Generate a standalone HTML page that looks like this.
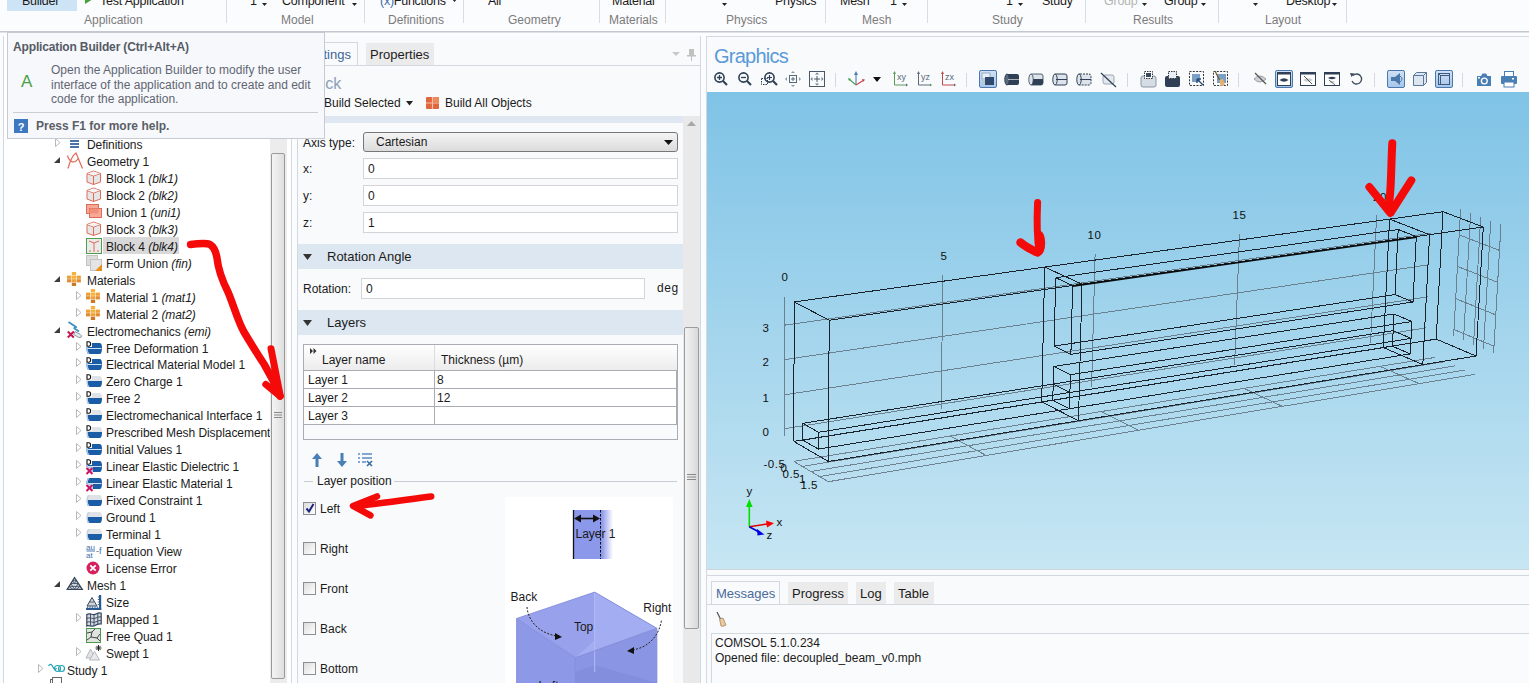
<!DOCTYPE html><html><head><meta charset="utf-8"><title>COMSOL</title><style>
*{margin:0;padding:0;box-sizing:border-box}
html,body{width:1529px;height:683px;overflow:hidden;background:#fbfcfe;font-family:"Liberation Sans",sans-serif;font-size:12px;color:#1b1b1b;position:relative}
.a{position:absolute;white-space:nowrap;line-height:14px}
.lbl{color:#7d7d7d}
.sep{position:absolute;width:1px;background:#d9dce2;top:0;height:23px}
svg{position:absolute;overflow:visible}
i{font-style:italic}
</style></head><body>
<div class="a" style="left:7px;top:0px;width:70px;height:11px;background:#cde4f7;"></div>
<div class="a" style="left:22px;top:-6px;font-size:12.5px;letter-spacing:-0.25px">Builder</div>
<svg style="left:85px;top:-6px;" width="8" height="10" viewBox="0 0 8 10"><path d="M0 0 L8 5 L0 10Z" fill="#46a23a"/></svg>
<div class="a" style="left:100px;top:-6px;font-size:12.5px;letter-spacing:-0.2px">Test Application</div>
<div class="a" style="left:84px;top:13px;color:#7b7b7b;">Application</div>
<div class="sep" style="left:226px"></div>
<div class="a" style="left:250px;top:-6px;font-size:12.5px;letter-spacing:-0.25px">1</div>
<svg style="left:262px;top:3px;" width="5" height="3" viewBox="0 0 5 3"><path d="M0 0H5L2.5 3Z" fill="#222"/></svg>
<div class="a" style="left:282px;top:-6px;font-size:12.5px;letter-spacing:-0.25px">Component</div>
<svg style="left:352px;top:3px;" width="5" height="3" viewBox="0 0 5 3"><path d="M0 0H5L2.5 3Z" fill="#222"/></svg>
<div class="a" style="left:281px;top:13px;color:#7b7b7b;">Model</div>
<div class="sep" style="left:364px"></div>
<div class="a" style="left:380px;top:-6px;font-size:12.5px;letter-spacing:-0.25px"><span style="color:#3b6ea8">(x)</span>Functions</div>
<svg style="left:452px;top:-1px;" width="5" height="3" viewBox="0 0 5 3"><path d="M0 0H5L2.5 3Z" fill="#222"/></svg>
<div class="a" style="left:388px;top:13px;color:#7b7b7b;">Definitions</div>
<div class="sep" style="left:463px"></div>
<div class="a" style="left:488px;top:-6px;font-size:12.5px;letter-spacing:-0.25px">All</div>
<div class="a" style="left:508px;top:13px;color:#7b7b7b;">Geometry</div>
<div class="sep" style="left:599px"></div>
<div class="a" style="left:612px;top:-6px;font-size:12.5px;letter-spacing:-0.25px">Material</div>
<div class="a" style="left:609px;top:13px;color:#7b7b7b;">Materials</div>
<div class="sep" style="left:665px"></div>
<svg style="left:722px;top:3px;" width="5" height="3" viewBox="0 0 5 3"><path d="M0 0H5L2.5 3Z" fill="#222"/></svg>
<div class="a" style="left:775px;top:-6px;font-size:12.5px;letter-spacing:-0.25px">Physics</div>
<div class="a" style="left:726px;top:13px;color:#7b7b7b;">Physics</div>
<div class="sep" style="left:825px"></div>
<div class="a" style="left:840px;top:-6px;font-size:12.5px;letter-spacing:-0.25px">Mesh</div>
<div class="a" style="left:890px;top:-6px;font-size:12.5px;letter-spacing:-0.25px">1</div>
<svg style="left:902px;top:3px;" width="5" height="3" viewBox="0 0 5 3"><path d="M0 0H5L2.5 3Z" fill="#222"/></svg>
<div class="a" style="left:862px;top:13px;color:#7b7b7b;">Mesh</div>
<div class="sep" style="left:927px"></div>
<div class="a" style="left:1006px;top:-6px;font-size:12.5px;letter-spacing:-0.25px">1</div>
<svg style="left:1018px;top:3px;" width="5" height="3" viewBox="0 0 5 3"><path d="M0 0H5L2.5 3Z" fill="#222"/></svg>
<div class="a" style="left:1042px;top:-6px;font-size:12.5px;letter-spacing:-0.25px">Study</div>
<div class="a" style="left:992px;top:13px;color:#7b7b7b;">Study</div>
<div class="sep" style="left:1085px"></div>
<div class="a" style="left:1104px;top:-6px;font-size:12.5px;color:#b4b4b4;letter-spacing:-0.25px">Group</div>
<svg style="left:1142px;top:3px;" width="5" height="3" viewBox="0 0 5 3"><path d="M0 0H5L2.5 3Z" fill="#222"/></svg>
<div class="a" style="left:1164px;top:-6px;font-size:12.5px;letter-spacing:-0.25px">Group</div>
<svg style="left:1201px;top:3px;" width="5" height="3" viewBox="0 0 5 3"><path d="M0 0H5L2.5 3Z" fill="#222"/></svg>
<div class="a" style="left:1133px;top:13px;color:#7b7b7b;">Results</div>
<div class="sep" style="left:1218px"></div>
<svg style="left:1253px;top:3px;" width="5" height="3" viewBox="0 0 5 3"><path d="M0 0H5L2.5 3Z" fill="#222"/></svg>
<div class="a" style="left:1286px;top:-6px;font-size:12.5px;letter-spacing:-0.25px">Desktop</div>
<svg style="left:1332px;top:3px;" width="5" height="3" viewBox="0 0 5 3"><path d="M0 0H5L2.5 3Z" fill="#222"/></svg>
<div class="a" style="left:1265px;top:13px;color:#7b7b7b;">Layout</div>
<div class="sep" style="left:1346px"></div>
<div class="a" style="left:0px;top:31px;width:1529px;height:1px;background:#c3c7cf;"></div>
<div class="a" style="left:0px;top:32px;width:1529px;height:1px;background:#dfe2e7;"></div>
<div class="a" style="left:3px;top:36px;width:289px;height:647px;background:#ffffff;border-left:1px solid #d3d7de;border-right:1px solid #d3d7de"></div>
<svg style="left:55px;top:138px;" width="6" height="9" viewBox="0 0 6 9"><path d="M0.5 0.5L5 4.5L0.5 8.5Z" fill="#fff" stroke="#b9b9b9" stroke-width="1"/></svg>
<svg style="left:70px;top:140px;" width="17" height="17" viewBox="0 0 17 17"><rect x="0" y="0" width="9" height="2" fill="#4a72a8"/><rect x="0" y="3" width="9" height="2" fill="#4a72a8"/><rect x="0" y="6" width="9" height="2" fill="#4a72a8"/></svg>
<div class="a" style="left:87px;top:138px;letter-spacing:-0.06px">Definitions</div>
<svg style="left:54px;top:157px;" width="7" height="7" viewBox="0 0 7 7"><path d="M6 0V6H0Z" fill="#3c3c3c"/></svg>
<svg style="left:67px;top:152px;" width="17" height="17" viewBox="0 0 17 17"><path d="M1 16.5 C3 9 6 3 9 1 L15.5 16.5 M0.5 3.5 C2.5 11 8 12 11.5 6" fill="none" stroke="#e06a58" stroke-width="1.2"/></svg>
<div class="a" style="left:87px;top:155px;letter-spacing:-0.06px">Geometry 1</div>
<svg style="left:86px;top:170px;" width="17" height="17" viewBox="0 0 17 17"><path d="M1 3.5 L7.5 1 L14.5 3.5 L14.5 12 L7.5 14.5 L1 12Z" fill="#e6e6e6" stroke="#e06a58" stroke-width="1"/><path d="M1 3.5 L7.5 6 L14.5 3.5 M7.5 6 V14.5" fill="none" stroke="#e06a58" stroke-width="1"/><path d="M1.5 3.6 L7.5 1.5 L14 3.6 L7.5 5.6Z" fill="#f4f4f4"/></svg>
<div class="a" style="left:106px;top:172px;letter-spacing:-0.06px">Block 1 <i>(blk1)</i></div>
<svg style="left:86px;top:187px;" width="17" height="17" viewBox="0 0 17 17"><path d="M1 3.5 L7.5 1 L14.5 3.5 L14.5 12 L7.5 14.5 L1 12Z" fill="#e6e6e6" stroke="#e06a58" stroke-width="1"/><path d="M1 3.5 L7.5 6 L14.5 3.5 M7.5 6 V14.5" fill="none" stroke="#e06a58" stroke-width="1"/><path d="M1.5 3.6 L7.5 1.5 L14 3.6 L7.5 5.6Z" fill="#f4f4f4"/></svg>
<div class="a" style="left:106px;top:189px;letter-spacing:-0.06px">Block 2 <i>(blk2)</i></div>
<svg style="left:86px;top:204px;" width="17" height="17" viewBox="0 0 17 17"><rect x="0.5" y="0.5" width="12" height="9" fill="#f7a995" stroke="#e06a58"/><rect x="3.5" y="4.5" width="12" height="9" fill="#f7a995" stroke="#e06a58"/><path d="M3.5 4.5 H12.5 V9.5 H3.5Z" fill="#f08f7a"/></svg>
<div class="a" style="left:106px;top:206px;letter-spacing:-0.06px">Union 1 <i>(uni1)</i></div>
<svg style="left:86px;top:221px;" width="17" height="17" viewBox="0 0 17 17"><path d="M1 3.5 L7.5 1 L14.5 3.5 L14.5 12 L7.5 14.5 L1 12Z" fill="#e6e6e6" stroke="#e06a58" stroke-width="1"/><path d="M1 3.5 L7.5 6 L14.5 3.5 M7.5 6 V14.5" fill="none" stroke="#e06a58" stroke-width="1"/><path d="M1.5 3.6 L7.5 1.5 L14 3.6 L7.5 5.6Z" fill="#f4f4f4"/></svg>
<div class="a" style="left:106px;top:223px;letter-spacing:-0.06px">Block 3 <i>(blk3)</i></div>
<svg style="left:86px;top:238px;" width="17" height="17" viewBox="0 0 17 17"><rect x="0.5" y="0.5" width="15" height="15" fill="#eaeaea" stroke="#4aa04a"/><path d="M3 3 L8 5 L13 3 M8 5 V14 M3 13 H5 M11 13 H13" fill="none" stroke="#e06a58"/></svg>
<div class="a" style="left:103px;top:237px;width:76px;height:17px;background:#d9d9d9;"></div>
<div class="a" style="left:106px;top:240px;letter-spacing:-0.06px">Block 4 <i>(blk4)</i></div>
<svg style="left:86px;top:255px;" width="17" height="17" viewBox="0 0 17 17"><rect x="0.5" y="0.5" width="11" height="10" fill="#dcdcdc" stroke="#c4c4c4"/><rect x="4.5" y="4.5" width="11" height="11" fill="#e4e4e4" stroke="#c4c4c4"/><path d="M16 9 V16 H9Z" fill="#e8901c"/></svg>
<div class="a" style="left:106px;top:257px;letter-spacing:-0.06px">Form Union <i>(fin)</i></div>
<svg style="left:54px;top:276px;" width="7" height="7" viewBox="0 0 7 7"><path d="M6 0V6H0Z" fill="#3c3c3c"/></svg>
<svg style="left:67px;top:272px;" width="17" height="17" viewBox="0 0 17 17"><rect x="4.8" y="0" width="4.3" height="3.2" fill="#f7b23b"/><rect x="0" y="3.6" width="4.3" height="3.2" fill="#eea03a"/><rect x="4.8" y="3.6" width="4.3" height="3.2" fill="#f7b23b"/><rect x="9.6" y="3.6" width="4.3" height="3.2" fill="#eea03a"/><rect x="0" y="7.2" width="4.3" height="3.2" fill="#e08c30"/><rect x="4.8" y="7.2" width="4.3" height="3.2" fill="#eea03a"/><rect x="9.6" y="7.2" width="4.3" height="3.2" fill="#e08c30"/><rect x="4.8" y="10.8" width="4.3" height="3.2" fill="#c9782a"/></svg>
<div class="a" style="left:87px;top:274px;letter-spacing:-0.06px">Materials</div>
<svg style="left:76px;top:291px;" width="6" height="9" viewBox="0 0 6 9"><path d="M0.5 0.5L5 4.5L0.5 8.5Z" fill="#fff" stroke="#b9b9b9" stroke-width="1"/></svg>
<svg style="left:86px;top:289px;" width="17" height="17" viewBox="0 0 17 17"><rect x="4.8" y="0" width="4.3" height="3.2" fill="#f7b23b"/><rect x="0" y="3.6" width="4.3" height="3.2" fill="#eea03a"/><rect x="4.8" y="3.6" width="4.3" height="3.2" fill="#f7b23b"/><rect x="9.6" y="3.6" width="4.3" height="3.2" fill="#eea03a"/><rect x="0" y="7.2" width="4.3" height="3.2" fill="#e08c30"/><rect x="4.8" y="7.2" width="4.3" height="3.2" fill="#eea03a"/><rect x="9.6" y="7.2" width="4.3" height="3.2" fill="#e08c30"/><rect x="4.8" y="10.8" width="4.3" height="3.2" fill="#c9782a"/></svg>
<div class="a" style="left:106px;top:291px;letter-spacing:-0.06px">Material 1 <i>(mat1)</i></div>
<svg style="left:76px;top:308px;" width="6" height="9" viewBox="0 0 6 9"><path d="M0.5 0.5L5 4.5L0.5 8.5Z" fill="#fff" stroke="#b9b9b9" stroke-width="1"/></svg>
<svg style="left:86px;top:306px;" width="17" height="17" viewBox="0 0 17 17"><rect x="4.8" y="0" width="4.3" height="3.2" fill="#f7b23b"/><rect x="0" y="3.6" width="4.3" height="3.2" fill="#eea03a"/><rect x="4.8" y="3.6" width="4.3" height="3.2" fill="#f7b23b"/><rect x="9.6" y="3.6" width="4.3" height="3.2" fill="#eea03a"/><rect x="0" y="7.2" width="4.3" height="3.2" fill="#e08c30"/><rect x="4.8" y="7.2" width="4.3" height="3.2" fill="#eea03a"/><rect x="9.6" y="7.2" width="4.3" height="3.2" fill="#e08c30"/><rect x="4.8" y="10.8" width="4.3" height="3.2" fill="#c9782a"/></svg>
<div class="a" style="left:106px;top:308px;letter-spacing:-0.06px">Material 2 <i>(mat2)</i></div>
<svg style="left:54px;top:327px;" width="7" height="7" viewBox="0 0 7 7"><path d="M6 0V6H0Z" fill="#3c3c3c"/></svg>
<svg style="left:67px;top:321px;" width="17" height="17" viewBox="0 0 17 17"><path d="M1.5 1 L9.5 6.2 L6.8 7 L12 10.5" fill="none" stroke="#3f8ec4" stroke-width="1.8" stroke-linejoin="bevel"/><path d="M8 10.5 L13 13.2 Q15.2 14.6 14.2 16 Q13.2 17.2 11.2 16.2 L6.8 13.6Z" fill="#e4eaee" stroke="#7d8c98" stroke-width="0.9"/><path d="M0.8 10.5 L6.8 16.5 M6.8 10.5 L0.8 16.5" stroke="#c8124e" stroke-width="1.9"/></svg>
<div class="a" style="left:87px;top:325px;letter-spacing:-0.06px">Electromechanics <i>(emi)</i></div>
<svg style="left:76px;top:342px;" width="6" height="9" viewBox="0 0 6 9"><path d="M0.5 0.5L5 4.5L0.5 8.5Z" fill="#fff" stroke="#b9b9b9" stroke-width="1"/></svg>
<svg style="left:86px;top:342px;" width="17" height="14" viewBox="0 0 17 14"><path d="M3 1 H13.5 Q16 1 16 6 Q16 12 13.5 12 H3 Q0.5 12 0.5 6.5 Q0.5 1 3 1Z" fill="#1b5ca6"/><path d="M1.5 6.5 H15.5" stroke="#cfe0f2" stroke-width="1"/><path d="M3.2 1.5 Q1.2 1.5 1.2 6.5 Q1.2 11.5 3.2 11.5" fill="none" stroke="#a9c8ea" stroke-width="1.3"/><rect x="0" y="-1" width="6" height="6" fill="#fff"/><path d="M1 -0.2 H2.8 Q4.6 -0.2 4.6 2 Q4.6 4.2 2.8 4.2 H1Z" fill="none" stroke="#111" stroke-width="1.1"/></svg>
<div class="a" style="left:106px;top:342px;letter-spacing:-0.06px">Free Deformation 1</div>
<svg style="left:76px;top:358px;" width="6" height="9" viewBox="0 0 6 9"><path d="M0.5 0.5L5 4.5L0.5 8.5Z" fill="#fff" stroke="#b9b9b9" stroke-width="1"/></svg>
<svg style="left:86px;top:358px;" width="17" height="14" viewBox="0 0 17 14"><path d="M3 1 H13.5 Q16 1 16 6 Q16 12 13.5 12 H3 Q0.5 12 0.5 6.5 Q0.5 1 3 1Z" fill="#1b5ca6"/><path d="M1.5 6.5 H15.5" stroke="#cfe0f2" stroke-width="1"/><path d="M3.2 1.5 Q1.2 1.5 1.2 6.5 Q1.2 11.5 3.2 11.5" fill="none" stroke="#a9c8ea" stroke-width="1.3"/><rect x="0" y="-1" width="6" height="6" fill="#fff"/><path d="M1 -0.2 H2.8 Q4.6 -0.2 4.6 2 Q4.6 4.2 2.8 4.2 H1Z" fill="none" stroke="#111" stroke-width="1.1"/></svg>
<div class="a" style="left:106px;top:358px;letter-spacing:-0.06px">Electrical Material Model 1</div>
<svg style="left:76px;top:375px;" width="6" height="9" viewBox="0 0 6 9"><path d="M0.5 0.5L5 4.5L0.5 8.5Z" fill="#fff" stroke="#b9b9b9" stroke-width="1"/></svg>
<svg style="left:86px;top:375px;" width="17" height="14" viewBox="0 0 17 14"><path d="M3 1 H13.5 Q16 1 16 6 Q16 12 13.5 12 H3 Q0.5 12 0.5 6.5 Q0.5 1 3 1Z" fill="#dfe2e6"/><path d="M1 6 H16 Q16 12 13.5 12 H3 Q0.5 12 1 6Z" fill="#1b5ca6"/><path d="M3.2 1.5 Q1.2 1.5 1.2 6.5 Q1.2 11.5 3.2 11.5" fill="none" stroke="#c3d3e3" stroke-width="1.3"/><rect x="0" y="-1" width="6" height="6" fill="#fff"/><path d="M1 -0.2 H2.8 Q4.6 -0.2 4.6 2 Q4.6 4.2 2.8 4.2 H1Z" fill="none" stroke="#111" stroke-width="1.1"/></svg>
<div class="a" style="left:106px;top:375px;letter-spacing:-0.06px">Zero Charge 1</div>
<svg style="left:76px;top:392px;" width="6" height="9" viewBox="0 0 6 9"><path d="M0.5 0.5L5 4.5L0.5 8.5Z" fill="#fff" stroke="#b9b9b9" stroke-width="1"/></svg>
<svg style="left:86px;top:392px;" width="17" height="14" viewBox="0 0 17 14"><path d="M3 1 H13.5 Q16 1 16 6 Q16 12 13.5 12 H3 Q0.5 12 0.5 6.5 Q0.5 1 3 1Z" fill="#dfe2e6"/><path d="M1 6 H16 Q16 12 13.5 12 H3 Q0.5 12 1 6Z" fill="#1b5ca6"/><path d="M3.2 1.5 Q1.2 1.5 1.2 6.5 Q1.2 11.5 3.2 11.5" fill="none" stroke="#c3d3e3" stroke-width="1.3"/><rect x="0" y="-1" width="6" height="6" fill="#fff"/><path d="M1 -0.2 H2.8 Q4.6 -0.2 4.6 2 Q4.6 4.2 2.8 4.2 H1Z" fill="none" stroke="#111" stroke-width="1.1"/></svg>
<div class="a" style="left:106px;top:392px;letter-spacing:-0.06px">Free 2</div>
<svg style="left:76px;top:409px;" width="6" height="9" viewBox="0 0 6 9"><path d="M0.5 0.5L5 4.5L0.5 8.5Z" fill="#fff" stroke="#b9b9b9" stroke-width="1"/></svg>
<svg style="left:86px;top:409px;" width="17" height="14" viewBox="0 0 17 14"><path d="M3 1 H13.5 Q16 1 16 6 Q16 12 13.5 12 H3 Q0.5 12 0.5 6.5 Q0.5 1 3 1Z" fill="#dfe2e6"/><path d="M1 6 H16 Q16 12 13.5 12 H3 Q0.5 12 1 6Z" fill="#1b5ca6"/><path d="M3.2 1.5 Q1.2 1.5 1.2 6.5 Q1.2 11.5 3.2 11.5" fill="none" stroke="#c3d3e3" stroke-width="1.3"/><rect x="0" y="-1" width="6" height="6" fill="#fff"/><path d="M1 -0.2 H2.8 Q4.6 -0.2 4.6 2 Q4.6 4.2 2.8 4.2 H1Z" fill="none" stroke="#111" stroke-width="1.1"/></svg>
<div class="a" style="left:106px;top:409px;letter-spacing:-0.06px">Electromechanical Interface 1</div>
<svg style="left:76px;top:426px;" width="6" height="9" viewBox="0 0 6 9"><path d="M0.5 0.5L5 4.5L0.5 8.5Z" fill="#fff" stroke="#b9b9b9" stroke-width="1"/></svg>
<svg style="left:86px;top:426px;" width="17" height="14" viewBox="0 0 17 14"><path d="M3 1 H13.5 Q16 1 16 6 Q16 12 13.5 12 H3 Q0.5 12 0.5 6.5 Q0.5 1 3 1Z" fill="#dfe2e6"/><path d="M1 6 H16 Q16 12 13.5 12 H3 Q0.5 12 1 6Z" fill="#1b5ca6"/><path d="M3.2 1.5 Q1.2 1.5 1.2 6.5 Q1.2 11.5 3.2 11.5" fill="none" stroke="#c3d3e3" stroke-width="1.3"/><rect x="0" y="-1" width="6" height="6" fill="#fff"/><path d="M1 -0.2 H2.8 Q4.6 -0.2 4.6 2 Q4.6 4.2 2.8 4.2 H1Z" fill="none" stroke="#111" stroke-width="1.1"/></svg>
<div class="a" style="left:106px;top:426px;letter-spacing:-0.06px">Prescribed Mesh Displacement</div>
<svg style="left:76px;top:443px;" width="6" height="9" viewBox="0 0 6 9"><path d="M0.5 0.5L5 4.5L0.5 8.5Z" fill="#fff" stroke="#b9b9b9" stroke-width="1"/></svg>
<svg style="left:86px;top:443px;" width="17" height="14" viewBox="0 0 17 14"><path d="M3 1 H13.5 Q16 1 16 6 Q16 12 13.5 12 H3 Q0.5 12 0.5 6.5 Q0.5 1 3 1Z" fill="#1b5ca6"/><path d="M1.5 6.5 H15.5" stroke="#cfe0f2" stroke-width="1"/><path d="M3.2 1.5 Q1.2 1.5 1.2 6.5 Q1.2 11.5 3.2 11.5" fill="none" stroke="#a9c8ea" stroke-width="1.3"/><rect x="0" y="-1" width="6" height="6" fill="#fff"/><path d="M1 -0.2 H2.8 Q4.6 -0.2 4.6 2 Q4.6 4.2 2.8 4.2 H1Z" fill="none" stroke="#111" stroke-width="1.1"/></svg>
<div class="a" style="left:106px;top:443px;letter-spacing:-0.06px">Initial Values 1</div>
<svg style="left:76px;top:460px;" width="6" height="9" viewBox="0 0 6 9"><path d="M0.5 0.5L5 4.5L0.5 8.5Z" fill="#fff" stroke="#b9b9b9" stroke-width="1"/></svg>
<svg style="left:86px;top:460px;" width="17" height="14" viewBox="0 0 17 14"><path d="M3 1 H13.5 Q16 1 16 6 Q16 12 13.5 12 H3 Q0.5 12 0.5 6.5 Q0.5 1 3 1Z" fill="#1b5ca6"/><path d="M1.5 6.5 H15.5" stroke="#cfe0f2" stroke-width="1"/><path d="M3.2 1.5 Q1.2 1.5 1.2 6.5 Q1.2 11.5 3.2 11.5" fill="none" stroke="#a9c8ea" stroke-width="1.3"/><rect x="0" y="-1" width="6" height="6" fill="#fff"/><path d="M1 -0.2 H2.8 Q4.6 -0.2 4.6 2 Q4.6 4.2 2.8 4.2 H1Z" fill="none" stroke="#111" stroke-width="1.1"/><rect x="0" y="7" width="7" height="7" fill="#fff" opacity="0.7"/><path d="M0.5 8 L6.5 14 M6.5 8 L0.5 14" stroke="#cc1260" stroke-width="1.9"/></svg>
<div class="a" style="left:106px;top:460px;letter-spacing:-0.06px">Linear Elastic Dielectric 1</div>
<svg style="left:76px;top:477px;" width="6" height="9" viewBox="0 0 6 9"><path d="M0.5 0.5L5 4.5L0.5 8.5Z" fill="#fff" stroke="#b9b9b9" stroke-width="1"/></svg>
<svg style="left:86px;top:477px;" width="17" height="14" viewBox="0 0 17 14"><path d="M3 1 H13.5 Q16 1 16 6 Q16 12 13.5 12 H3 Q0.5 12 0.5 6.5 Q0.5 1 3 1Z" fill="#1b5ca6"/><path d="M1.5 6.5 H15.5" stroke="#cfe0f2" stroke-width="1"/><path d="M3.2 1.5 Q1.2 1.5 1.2 6.5 Q1.2 11.5 3.2 11.5" fill="none" stroke="#a9c8ea" stroke-width="1.3"/><rect x="0" y="7" width="7" height="7" fill="#fff" opacity="0.7"/><path d="M0.5 8 L6.5 14 M6.5 8 L0.5 14" stroke="#cc1260" stroke-width="1.9"/></svg>
<div class="a" style="left:106px;top:477px;letter-spacing:-0.06px">Linear Elastic Material 1</div>
<svg style="left:76px;top:494px;" width="6" height="9" viewBox="0 0 6 9"><path d="M0.5 0.5L5 4.5L0.5 8.5Z" fill="#fff" stroke="#b9b9b9" stroke-width="1"/></svg>
<svg style="left:86px;top:494px;" width="17" height="14" viewBox="0 0 17 14"><path d="M3 1 H13.5 Q16 1 16 6 Q16 12 13.5 12 H3 Q0.5 12 0.5 6.5 Q0.5 1 3 1Z" fill="#dfe2e6"/><path d="M1 6 H16 Q16 12 13.5 12 H3 Q0.5 12 1 6Z" fill="#1b5ca6"/><path d="M3.2 1.5 Q1.2 1.5 1.2 6.5 Q1.2 11.5 3.2 11.5" fill="none" stroke="#c3d3e3" stroke-width="1.3"/></svg>
<div class="a" style="left:106px;top:494px;letter-spacing:-0.06px">Fixed Constraint 1</div>
<svg style="left:76px;top:511px;" width="6" height="9" viewBox="0 0 6 9"><path d="M0.5 0.5L5 4.5L0.5 8.5Z" fill="#fff" stroke="#b9b9b9" stroke-width="1"/></svg>
<svg style="left:86px;top:511px;" width="17" height="14" viewBox="0 0 17 14"><path d="M3 1 H13.5 Q16 1 16 6 Q16 12 13.5 12 H3 Q0.5 12 0.5 6.5 Q0.5 1 3 1Z" fill="#dfe2e6"/><path d="M1 6 H16 Q16 12 13.5 12 H3 Q0.5 12 1 6Z" fill="#1b5ca6"/><path d="M3.2 1.5 Q1.2 1.5 1.2 6.5 Q1.2 11.5 3.2 11.5" fill="none" stroke="#c3d3e3" stroke-width="1.3"/></svg>
<div class="a" style="left:106px;top:511px;letter-spacing:-0.06px">Ground 1</div>
<svg style="left:76px;top:528px;" width="6" height="9" viewBox="0 0 6 9"><path d="M0.5 0.5L5 4.5L0.5 8.5Z" fill="#fff" stroke="#b9b9b9" stroke-width="1"/></svg>
<svg style="left:86px;top:528px;" width="17" height="14" viewBox="0 0 17 14"><path d="M3 1 H13.5 Q16 1 16 6 Q16 12 13.5 12 H3 Q0.5 12 0.5 6.5 Q0.5 1 3 1Z" fill="#dfe2e6"/><path d="M1 6 H16 Q16 12 13.5 12 H3 Q0.5 12 1 6Z" fill="#1b5ca6"/><path d="M3.2 1.5 Q1.2 1.5 1.2 6.5 Q1.2 11.5 3.2 11.5" fill="none" stroke="#c3d3e3" stroke-width="1.3"/></svg>
<div class="a" style="left:106px;top:528px;letter-spacing:-0.06px">Terminal 1</div>
<svg style="left:86px;top:543px;" width="17" height="17" viewBox="0 0 17 17"><text x="0" y="6.5" font-size="8" fill="#3b6ea8" font-family="Liberation Sans">au</text><path d="M0.5 8 H9" stroke="#3b6ea8" stroke-width="0.9"/><text x="0" y="15" font-size="8" fill="#3b6ea8" font-family="Liberation Sans">at</text><text x="10" y="10.5" font-size="9" fill="#3b6ea8" font-family="Liberation Sans">-f</text></svg>
<div class="a" style="left:106px;top:545px;letter-spacing:-0.06px">Equation View</div>
<svg style="left:86px;top:562px;" width="17" height="17" viewBox="0 0 17 17"><circle cx="7" cy="6" r="6.5" fill="#d3225c"/><path d="M4.3 3.3 L9.7 8.7 M9.7 3.3 L4.3 8.7" stroke="#fff" stroke-width="1.8"/></svg>
<div class="a" style="left:106px;top:562px;letter-spacing:-0.06px">License Error</div>
<svg style="left:54px;top:581px;" width="7" height="7" viewBox="0 0 7 7"><path d="M6 0V6H0Z" fill="#3c3c3c"/></svg>
<svg style="left:67px;top:577px;" width="17" height="17" viewBox="0 0 17 17"><path d="M7.5 0.7 L15.3 12.3 H0.2Z" fill="#d4d8de" stroke="#39485a" stroke-width="1.3"/><path d="M3.9 6.5 H11.1 M7.5 12.3 L3.9 6.5 M7.5 12.3 L11.1 6.5 M2 9.4 H13 M5.7 3.6 H9.3 M5.7 12.3 L2 9.4 M9.3 12.3 L13 9.4 M5.7 3.6 L7.5 6.5 L9.3 3.6" fill="none" stroke="#39485a" stroke-width="0.8"/></svg>
<div class="a" style="left:87px;top:579px;letter-spacing:-0.06px">Mesh 1</div>
<svg style="left:86px;top:595px;" width="17" height="17" viewBox="0 0 17 17"><path d="M6 2.5 L11 11 H1Z" fill="#d0d5dc" stroke="#39485a" stroke-width="1"/><path d="M3.5 7 H8.5" stroke="#39485a" stroke-width="0.8"/><rect x="13" y="0" width="2.2" height="15" fill="#2b5a90"/><rect x="0" y="12.8" width="15.2" height="2.2" fill="#2b5a90"/><path d="M1.5 11.5 V12.8 M4 11.5 V12.8 M6.5 11.5 V12.8 M9 11.5 V12.8 M11.5 11.5V12.8 M11.8 2H13 M11.8 4.5H13 M11.8 7H13 M11.8 9.5H13" stroke="#2b5a90" stroke-width="0.9"/></svg>
<div class="a" style="left:106px;top:596px;letter-spacing:-0.06px">Size</div>
<svg style="left:76px;top:613px;" width="6" height="9" viewBox="0 0 6 9"><path d="M0.5 0.5L5 4.5L0.5 8.5Z" fill="#fff" stroke="#b9b9b9" stroke-width="1"/></svg>
<svg style="left:86px;top:612px;" width="17" height="17" viewBox="0 0 17 17"><path d="M0.8 2.5 C4 0.5 7 4 10 2 C12 1 14 0.5 15.2 1.2 V12 C13 11.5 11 12 9 13.5 C6 15.5 3 12.5 0.8 14Z" fill="#d4d9e0" stroke="#34465c" stroke-width="1.2"/><path d="M4.5 1.5 V13.5 M8 2.8 V14 M11.8 1.2 V12.5 M0.8 6.5 C4 4.5 7 8 10 6 C12 5 14 4.5 15.2 5 M0.8 10.3 C4 8.3 7 11.8 10 9.8 C12 8.8 14 8.3 15.2 8.6" fill="none" stroke="#34465c" stroke-width="0.9"/></svg>
<div class="a" style="left:106px;top:613px;letter-spacing:-0.06px">Mapped 1</div>
<svg style="left:86px;top:628px;" width="17" height="17" viewBox="0 0 17 17"><rect x="0.5" y="0.5" width="14" height="14" fill="#dfe4e0" stroke="#4a9a4a"/><path d="M1 5 L6 4 L9 1 M6 4 L5 9 L1 12 M5 9 L11 10 L14 13 M11 10 L14 6" fill="none" stroke="#333" stroke-width="0.9"/></svg>
<div class="a" style="left:106px;top:630px;letter-spacing:-0.06px">Free Quad 1</div>
<svg style="left:76px;top:647px;" width="6" height="9" viewBox="0 0 6 9"><path d="M0.5 0.5L5 4.5L0.5 8.5Z" fill="#fff" stroke="#b9b9b9" stroke-width="1"/></svg>
<svg style="left:86px;top:645px;" width="17" height="17" viewBox="0 0 17 17"><path d="M4.5 4 L9 13 H0Z" fill="#e2e4e6" stroke="#aeb2b8" stroke-width="0.9"/><path d="M8.5 6.5 L13.5 15 H3.5Z" fill="#e8eaec" stroke="#aeb2b8" stroke-width="0.9"/><path d="M12.5 0 V6 M9.5 3 H15.5 M10.4 0.9 L14.6 5.1 M14.6 0.9 L10.4 5.1" stroke="#2a2a2a" stroke-width="1"/></svg>
<div class="a" style="left:106px;top:647px;letter-spacing:-0.06px">Swept 1</div>
<svg style="left:38px;top:664px;" width="6" height="9" viewBox="0 0 6 9"><path d="M0.5 0.5L5 4.5L0.5 8.5Z" fill="#fff" stroke="#b9b9b9" stroke-width="1"/></svg>
<svg style="left:48px;top:663px;" width="17" height="17" viewBox="0 0 17 17"><path d="M0.5 3 C2 0.5 3.5 1 5 4 S7.5 7 8.5 5" fill="none" stroke="#25a3b5" stroke-width="1.3"/><circle cx="9.5" cy="5.5" r="3" fill="none" stroke="#25a3b5" stroke-width="1.2"/><circle cx="13.5" cy="5.5" r="3" fill="none" stroke="#25a3b5" stroke-width="1.2"/></svg>
<div class="a" style="left:67px;top:664px;letter-spacing:-0.06px">Study 1</div>
<div class="a" style="left:270px;top:139px;width:17px;height:544px;background:#ececec;"></div>
<div class="a" style="left:271px;top:153px;width:14px;height:526px;background:linear-gradient(90deg,#f4f4f4,#dedede);border:1px solid #9a9a9a;border-radius:2px"></div>
<svg style="left:274px;top:412px;" width="8" height="8" viewBox="0 0 8 8"><path d="M0 0.5H8M0 3H8M0 5.5H8" stroke="#8a8a8a" stroke-width="1"/></svg>
<svg style="left:50px;top:677px;" width="13" height="8" viewBox="0 0 13 8"><rect x="0.5" y="2.5" width="9" height="6" fill="#fff" stroke="#666"/><rect x="2.5" y="0.5" width="9" height="6" fill="#fff" stroke="#666"/></svg>
<div class="a" style="left:297px;top:36px;width:404px;height:647px;background:#f9fafc;border-left:1px solid #d3d7de;border-right:1px solid #d3d7de"></div>
<div class="a" style="left:298px;top:42px;width:60px;height:24px;background:#f9fafc;border:1px solid #d3d7de;border-bottom:none"></div>
<div class="a" style="left:304px;top:48px;font-size:13px;color:#3f6499;">Settings</div>
<div class="a" style="left:366px;top:43px;width:68px;height:22px;background:#ebebeb;"></div>
<div class="a" style="left:370px;top:48px;font-size:13px;">Properties</div>
<div class="a" style="left:298px;top:65px;width:403px;height:1px;background:#d3d7de;"></div>
<svg style="left:672px;top:52px;" width="8" height="5" viewBox="0 0 8 5"><path d="M0 0H8L4 4Z" fill="#c8c8c8"/></svg>
<svg style="left:687px;top:49px;" width="9" height="12" viewBox="0 0 9 12"><rect x="2" y="0" width="5" height="6" fill="#c0c0c0"/><rect x="0" y="6" width="9" height="1.5" fill="#c0c0c0"/><rect x="4" y="7" width="1" height="5" fill="#c0c0c0"/></svg>
<div class="a" style="left:302px;top:77px;font-size:16px;color:#8aa0b8;">Block</div>
<svg style="left:304px;top:96px;" width="16" height="13" viewBox="0 0 16 13"><rect x="0" y="0" width="16" height="13" fill="#e5e5e5"/></svg>
<div class="a" style="left:324px;top:96px;">Build Selected</div>
<svg style="left:406px;top:101px;" width="7" height="5" viewBox="0 0 7 5"><path d="M0 0H7L3.5 4.5Z" fill="#222"/></svg>
<svg style="left:426px;top:97px;" width="13" height="12" viewBox="0 0 13 12"><rect x="0" y="0" width="13" height="12" rx="1" fill="#e0663e"/><path d="M6.5 0V12M0 6H13" stroke="#f8c0a8" stroke-width="1.2"/><rect x="7" y="0" width="6" height="6" fill="#ec8a5e"/></svg>
<div class="a" style="left:445px;top:96px;">Build All Objects</div>
<div class="a" style="left:298px;top:116px;width:385px;height:567px;background:#f9fafc;"></div>
<div class="a" style="left:298px;top:116px;width:385px;height:7px;background:#dfe8f2;"></div>
<div class="a" style="left:683px;top:116px;width:17px;height:567px;background:#e9e9e9;"></div>
<svg style="left:687px;top:121px;" width="9" height="5" viewBox="0 0 9 5"><path d="M0 5L4.5 0L9 5Z" fill="#a8a8a8"/></svg>
<div class="a" style="left:684px;top:327px;width:15px;height:302px;background:linear-gradient(90deg,#f3f3f3,#d9d9d9);border:1px solid #9c9c9c;border-radius:2px"></div>
<svg style="left:687px;top:474px;" width="9" height="7" viewBox="0 0 9 7"><path d="M0 0.5H9M0 3H9M0 5.5H9" stroke="#888" stroke-width="1"/></svg>
<div class="a" style="left:303px;top:136px;">Axis type:</div>
<div class="a" style="left:363px;top:132px;width:315px;height:20px;background:linear-gradient(#f4f4f4,#dcdcdc);border:1px solid #777;border-radius:3px"></div>
<div class="a" style="left:376px;top:135px;">Cartesian</div>
<svg style="left:664px;top:140px;" width="9" height="5" viewBox="0 0 9 5"><path d="M0 0H9L4.5 5Z" fill="#111"/></svg>
<div class="a" style="left:303px;top:162px;">x:</div>
<div class="a" style="left:363px;top:158px;width:315px;height:21px;background:#fff;border:1px solid #d2d4d8"></div>
<div class="a" style="left:368px;top:162px;">0</div>
<div class="a" style="left:303px;top:189px;">y:</div>
<div class="a" style="left:363px;top:185px;width:315px;height:21px;background:#fff;border:1px solid #d2d4d8"></div>
<div class="a" style="left:368px;top:189px;">0</div>
<div class="a" style="left:303px;top:216px;">z:</div>
<div class="a" style="left:363px;top:212px;width:315px;height:21px;background:#fff;border:1px solid #d2d4d8"></div>
<div class="a" style="left:368px;top:216px;">1</div>
<div class="a" style="left:298px;top:244px;width:385px;height:25px;background:#dde7f2;"></div>
<svg style="left:303px;top:254px;" width="9" height="6" viewBox="0 0 9 6"><path d="M0 0H9L4.5 6Z" fill="#333"/></svg>
<div class="a" style="left:327px;top:250px;font-size:13px;">Rotation Angle</div>
<div class="a" style="left:303px;top:282px;">Rotation:</div>
<div class="a" style="left:361px;top:278px;width:284px;height:21px;background:#fff;border:1px solid #d2d4d8"></div>
<div class="a" style="left:366px;top:282px;">0</div>
<div class="a" style="left:657px;top:281px;letter-spacing:0.6px">deg</div>
<div class="a" style="left:298px;top:310px;width:385px;height:25px;background:#dde7f2;"></div>
<svg style="left:303px;top:320px;" width="9" height="6" viewBox="0 0 9 6"><path d="M0 0H9L4.5 6Z" fill="#333"/></svg>
<div class="a" style="left:327px;top:316px;font-size:13px;">Layers</div>
<div class="a" style="left:303px;top:344px;width:375px;height:96px;background:#f9fafc;border:1px solid #a9acb2"></div>
<div class="a" style="left:304px;top:345px;width:373px;height:25px;background:linear-gradient(#ffffff,#ececec);"></div>
<svg style="left:310px;top:348px;" width="7" height="6" viewBox="0 0 7 6"><path d="M0 0L3 3L0 6Z M3.5 0L6.5 3L3.5 6Z" fill="#333"/></svg>
<div class="a" style="left:322px;top:353px;">Layer name</div>
<div class="a" style="left:434px;top:345px;width:1px;height:25px;background:#dcdcdc;"></div>
<div class="a" style="left:441px;top:353px;">Thickness (µm)</div>
<div class="a" style="left:304px;top:370px;width:373px;height:19px;background:#fff;border-top:1px solid #a9acb2;border-bottom:1px solid #a9acb2"></div>
<div class="a" style="left:434px;top:370px;width:1px;height:19px;background:#a9acb2;"></div>
<div class="a" style="left:676px;top:370px;width:1px;height:19px;background:#a9acb2;"></div>
<div class="a" style="left:308px;top:373px;">Layer 1</div>
<div class="a" style="left:437px;top:373px;">8</div>
<div class="a" style="left:304px;top:388px;width:373px;height:19px;background:#fff;border-top:1px solid #a9acb2;border-bottom:1px solid #a9acb2"></div>
<div class="a" style="left:434px;top:388px;width:1px;height:19px;background:#a9acb2;"></div>
<div class="a" style="left:676px;top:388px;width:1px;height:19px;background:#a9acb2;"></div>
<div class="a" style="left:308px;top:391px;">Layer 2</div>
<div class="a" style="left:437px;top:391px;">12</div>
<div class="a" style="left:304px;top:406px;width:373px;height:19px;background:#fff;border-top:1px solid #a9acb2;border-bottom:1px solid #a9acb2"></div>
<div class="a" style="left:434px;top:406px;width:1px;height:19px;background:#a9acb2;"></div>
<div class="a" style="left:676px;top:406px;width:1px;height:19px;background:#a9acb2;"></div>
<div class="a" style="left:308px;top:409px;">Layer 3</div>
<div class="a" style="left:437px;top:409px;"></div>
<svg style="left:312px;top:453px;" width="10" height="14" viewBox="0 0 10 14"><path d="M5 0L10 6H6.5V14H3.5V6H0Z" fill="#4a7fb5"/></svg>
<svg style="left:337px;top:453px;" width="10" height="14" viewBox="0 0 10 14"><path d="M5 14L10 8H6.5V0H3.5V8H0Z" fill="#4a7fb5"/></svg>
<svg style="left:358px;top:453px;" width="14" height="14" viewBox="0 0 14 14"><path d="M0 1H2M4 1H14M0 5H2M4 5H14M0 9H2M4 9H8" stroke="#5a8ac0" stroke-width="1.5"/><path d="M9 8L14 13M14 8L9 13" stroke="#3a6aa0" stroke-width="1.6"/></svg>
<div class="a" style="left:304px;top:481px;width:9px;height:1px;background:#c9ccd2;"></div>
<div class="a" style="left:394px;top:481px;width:283px;height:1px;background:#c9ccd2;"></div>
<div class="a" style="left:317px;top:474px;">Layer position</div>
<div class="a" style="left:303px;top:502px;width:13px;height:13px;background:linear-gradient(135deg,#dcdcdc,#fff);border:1px solid #8e8f8f"></div>
<div class="a" style="left:320px;top:502px;">Left</div>
<div class="a" style="left:303px;top:542px;width:13px;height:13px;background:linear-gradient(135deg,#dcdcdc,#fff);border:1px solid #8e8f8f"></div>
<div class="a" style="left:320px;top:542px;">Right</div>
<div class="a" style="left:303px;top:582px;width:13px;height:13px;background:linear-gradient(135deg,#dcdcdc,#fff);border:1px solid #8e8f8f"></div>
<div class="a" style="left:320px;top:582px;">Front</div>
<div class="a" style="left:303px;top:622px;width:13px;height:13px;background:linear-gradient(135deg,#dcdcdc,#fff);border:1px solid #8e8f8f"></div>
<div class="a" style="left:320px;top:622px;">Back</div>
<div class="a" style="left:303px;top:662px;width:13px;height:13px;background:linear-gradient(135deg,#dcdcdc,#fff);border:1px solid #8e8f8f"></div>
<div class="a" style="left:320px;top:662px;">Bottom</div>
<svg style="left:305px;top:503px;" width="10" height="10" viewBox="0 0 10 10"><path d="M1.5 5.5L4 8.5L8.5 1" fill="none" stroke="#1a237e" stroke-width="2"/></svg>
<div class="a" style="left:505px;top:497px;width:168px;height:186px;background:#ffffff;"></div>
<svg style="left:505px;top:497px" width="168" height="186" viewBox="505 497 168 186"><defs><linearGradient id="lg1" x1="0" x2="1"><stop offset="0" stop-color="#8c98ea"/><stop offset="0.72" stop-color="#8c98ea"/><stop offset="1" stop-color="#ffffff"/></linearGradient></defs><rect x="573" y="510" width="40" height="49" fill="url(#lg1)"/><path d="M573.5 510V559" stroke="#111" stroke-width="1.3"/><path d="M600.5 510V559" stroke="#111" stroke-width="1" stroke-dasharray="2.5 1.5"/><path d="M580 518.5H594" stroke="#111" stroke-width="1.6"/><path d="M574 518.5L581 514.5V522.5Z M600 518.5L593 514.5V522.5Z" fill="#111"/><text x="575.5" y="538" style="font-family:Liberation Sans;font-size:12px;fill:#1a1a1a">Layer 1</text><path d="M516.6 618.5L594.7 592.1L656.9 628.3L575.4 657.7Z" fill="#98a2ec"/><path d="M594.7 592.1L656.9 628.3L575.4 657.7L594.7 640Z" fill="#a3adf1"/><path d="M516.6 618.5L575.4 657.7V683H516.6Z" fill="#8d98e7"/><path d="M575.4 657.7L656.9 628.3V683H575.4Z" fill="#8a95e3"/><path d="M575.4 672L594.7 665L656.9 683H575.4Z" fill="#7f8ad9" opacity="0.6"/><path d="M594.7 592.1V672" stroke="#b3bbf3" stroke-width="1"/><path d="M516.6 618.5L594.7 592.1L656.9 628.3L575.4 657.7Z M575.4 657.7V683 M516.6 618.5V683 M656.9 628.3V683" fill="none" stroke="#7c87d6" stroke-width="0.8"/><text x="510.5" y="600.5" style="font-family:Liberation Sans;font-size:12px;fill:#1a1a1a">Back</text><text x="643.3" y="611.7" style="font-family:Liberation Sans;font-size:12px;fill:#1a1a1a">Right</text><text x="573.9" y="631.3" style="font-family:Liberation Sans;font-size:12px;fill:#1a1a1a">Top</text><text x="538.5" y="690" style="font-family:Liberation Sans;font-size:12px;fill:#1a1a1a">Left</text><path d="M527 607C528 620 538 633 557 636" fill="none" stroke="#222" stroke-width="1" stroke-dasharray="2 1.5"/><path d="M555 633L562 637L555 640Z" fill="#111"/><path d="M661.4 620.7C659 636 648 648 632 650" fill="none" stroke="#222" stroke-width="1" stroke-dasharray="2 1.5"/><path d="M634 647L627 651L634 654Z" fill="#111"/></svg>
<div class="a" style="left:706px;top:36px;width:823px;height:540px;background:#f9fafc;border-left:1px solid #d3d7de;border-top:1px solid #d3d7de"></div>
<div class="a" style="left:714px;top:49px;font-size:20px;color:#5a9ad8;letter-spacing:-0.75px">Graphics</div>
<svg style="left:714px;top:72px;" width="18" height="18" viewBox="0 0 18 18"><circle cx="5.5" cy="5.5" r="4.6" fill="none" stroke="#2f3f55" stroke-width="1.6"/><path d="M9 9 L13 13" stroke="#2f3f55" stroke-width="2.2"/><path d="M3 5.5H8M5.5 3V8" stroke="#2f3f55" stroke-width="1.3"/></svg>
<svg style="left:738px;top:72px;" width="18" height="18" viewBox="0 0 18 18"><circle cx="5.5" cy="5.5" r="4.6" fill="none" stroke="#2f3f55" stroke-width="1.6"/><path d="M9 9 L13 13" stroke="#2f3f55" stroke-width="2.2"/><path d="M3 5.5H8" stroke="#2f3f55" stroke-width="1.3"/></svg>
<svg style="left:761px;top:72px;" width="18" height="18" viewBox="0 0 18 18"><rect x="0.5" y="6.5" width="6" height="6" fill="none" stroke="#2f3f55" stroke-dasharray="1.5 1"/><g transform="translate(3,0)"><circle cx="5.5" cy="5.5" r="4.6" fill="none" stroke="#2f3f55" stroke-width="1.6"/><path d="M9 9 L13 13" stroke="#2f3f55" stroke-width="2.2"/><path d="M3 5.5H8M5.5 3V8" stroke="#2f3f55" stroke-width="1.2"/></g></svg>
<svg style="left:785px;top:71px;" width="18" height="18" viewBox="0 0 18 18"><rect x="4.5" y="4.5" width="7" height="7" fill="none" stroke="#5a6878"/><path d="M8 6V10M6 8H10" stroke="#5a6878"/><path d="M8 0L6 2H10Z M8 16L6 14H10Z M0 8L2 6V10Z M16 8L14 6V10Z" fill="#8a9aaa"/></svg>
<svg style="left:809px;top:71px;" width="18" height="18" viewBox="0 0 18 18"><rect x="0.5" y="0.5" width="15" height="15" fill="none" stroke="#4a5868"/><path d="M8 5V11M5 8H11" stroke="#4a5868"/><path d="M8 1.5L6 3.5H10Z M8 14.5L6 12.5H10Z M1.5 8L3.5 6V10Z M14.5 8L12.5 6V10Z" fill="#6a7a8a"/></svg>
<div class="a" style="left:835px;top:73px;width:1px;height:14px;background:#d5d8de;"></div>
<svg style="left:848px;top:71px;" width="18" height="18" viewBox="0 0 18 18"><path d="M8 3V14" stroke="#4a7fb5" stroke-width="1.1"/><path d="M6 4L8 0L10 4Z" fill="#4a7fb5"/><path d="M8 14L1 8" stroke="#4aa04a" stroke-width="1.1"/><path d="M8 14L16 9" stroke="#d04050" stroke-width="1.1"/><path d="M14 8L17 8.5L15 11Z" fill="#d04050"/><path d="M0 7L3 8L1 10Z" fill="#4aa04a"/></svg>
<svg style="left:873px;top:77px;" width="8" height="5" viewBox="0 0 8 5"><path d="M0 0H8L4 5Z" fill="#111"/></svg>
<svg style="left:893px;top:71px;" width="18" height="18" viewBox="0 0 18 18"><path d="M1.5 2V14H14" fill="none" stroke="#5a9a5a" stroke-width="1"/><path d="M0 3L1.5 0L3 3Z" fill="#5a9a5a"/><path d="M13 12.5L15 14L13 15.5Z" fill="#5a6a7a"/><text x="4" y="9" font-size="9" fill="#5a6a7a" font-family="Liberation Sans">xy</text></svg>
<svg style="left:917px;top:71px;" width="18" height="18" viewBox="0 0 18 18"><path d="M1.5 2V14H14" fill="none" stroke="#5a6a7a" stroke-width="1"/><path d="M0 3L1.5 0L3 3Z" fill="#5a6a7a"/><path d="M13 12.5L15 14L13 15.5Z" fill="#5a9a5a"/><text x="4" y="9" font-size="9" fill="#5a6a7a" font-family="Liberation Sans">yz</text></svg>
<svg style="left:941px;top:71px;" width="18" height="18" viewBox="0 0 18 18"><path d="M1.5 2V14H14" fill="none" stroke="#c04a4a" stroke-width="1"/><path d="M0 3L1.5 0L3 3Z" fill="#c04a4a"/><path d="M13 12.5L15 14L13 15.5Z" fill="#5a6a7a"/><text x="4" y="9" font-size="9" fill="#5a6a7a" font-family="Liberation Sans">zx</text></svg>
<div class="a" style="left:966px;top:73px;width:1px;height:14px;background:#d5d8de;"></div>
<div class="a" style="left:979px;top:70px;width:18px;height:18px;background:linear-gradient(#cfe0f5,#a8c6ea);border:1px solid #4a78b0;border-radius:2px"></div>
<svg style="left:982px;top:73px;" width="18" height="18" viewBox="0 0 18 18"><rect x="0" y="0" width="8" height="6" fill="#e8eef5" stroke="#6a88a8" stroke-width="0.6"/><rect x="3" y="4" width="9" height="8" fill="#2f4a6e"/><rect x="0" y="6" width="3" height="6" fill="#b8c8d8"/></svg>
<svg style="left:1004px;top:73px;" width="17" height="14" viewBox="0 0 17 14"><rect x="2" y="1" width="13" height="11" rx="2" fill="#2f3f55"/><ellipse cx="3" cy="6.5" rx="2.2" ry="5.5" fill="#5a6a80" stroke="#2f3f55"/><path d="M4 6.5H15" stroke="#fff" stroke-width="0.6"/></svg>
<svg style="left:1028px;top:73px;" width="17" height="14" viewBox="0 0 17 14"><rect x="2" y="1" width="13" height="11" rx="2" fill="#dde3ea" stroke="#2f3f55" stroke-width="0.8"/><path d="M2 6H15V10Q15 12 13 12H4Q2 12 2 10Z" fill="#2f3f55"/><ellipse cx="3" cy="6.5" rx="2.2" ry="5.5" fill="#dde3ea" stroke="#2f3f55" stroke-width="0.8"/></svg>
<svg style="left:1052px;top:73px;" width="17" height="14" viewBox="0 0 17 14"><rect x="2" y="1" width="13" height="11" rx="2" fill="#dde3ea" stroke="#2f3f55" stroke-width="1"/><ellipse cx="3" cy="6.5" rx="2.2" ry="5.5" fill="#dde3ea" stroke="#2f3f55" stroke-width="1"/><path d="M4 6.5H15" stroke="#2f3f55"/></svg>
<svg style="left:1076px;top:73px;" width="17" height="14" viewBox="0 0 17 14"><rect x="2" y="1" width="13" height="11" rx="2" fill="#dde3ea" stroke="#2f3f55" stroke-width="1" stroke-dasharray="2 1"/><ellipse cx="3" cy="6.5" rx="2.2" ry="5.5" fill="#dde3ea" stroke="#2f3f55" stroke-width="1"/><path d="M4 6.5H15" stroke="#2f3f55"/></svg>
<svg style="left:1101px;top:73px;" width="17" height="14" viewBox="0 0 17 14"><rect x="2" y="2" width="11" height="9" rx="2" fill="#e4e8ec" stroke="#9aa8b8"/><path d="M0 0L15 14" stroke="#2f3f55" stroke-width="1.2"/></svg>
<div class="a" style="left:1127px;top:73px;width:1px;height:14px;background:#d5d8de;"></div>
<svg style="left:1140px;top:71px;" width="18" height="18" viewBox="0 0 18 18"><rect x="1" y="5" width="15" height="11" rx="2" fill="#d6dce4" stroke="#8a98a8"/><rect x="4.5" y="0.5" width="8" height="7" fill="#fff" stroke="#333" stroke-dasharray="1.5 1"/><rect x="6" y="2" width="5" height="4" fill="#3a4a60"/></svg>
<svg style="left:1164px;top:71px;" width="18" height="18" viewBox="0 0 18 18"><rect x="1" y="5" width="15" height="11" rx="2" fill="#2f3f55"/><rect x="4.5" y="0.5" width="8" height="7" fill="#e8eef5" stroke="#333" stroke-dasharray="1.5 1"/></svg>
<svg style="left:1189px;top:71px;" width="18" height="18" viewBox="0 0 18 18"><rect x="0.5" y="0.5" width="14" height="14" fill="none" stroke="#333" stroke-dasharray="2 1.3"/><rect x="3" y="3" width="8" height="8" fill="#7aa0c8"/><path d="M8 8L14 14M8 8V12M8 8H12" stroke="#2f4a70" stroke-width="1.4"/></svg>
<svg style="left:1213px;top:71px;" width="18" height="18" viewBox="0 0 18 18"><rect x="0.5" y="0.5" width="14" height="14" fill="none" stroke="#333" stroke-dasharray="2 1.3"/><rect x="4" y="3" width="9" height="9" fill="#7aa0c8"/><path d="M2 0L9 14" stroke="#7a5a30" stroke-width="1.3"/><path d="M6 9L10 8L12 14L8 15Z" fill="#e8b070"/></svg>
<div class="a" style="left:1238px;top:73px;width:1px;height:14px;background:#d5d8de;"></div>
<svg style="left:1253px;top:72px;" width="18" height="18" viewBox="0 0 18 18"><path d="M1 7Q7 1 13 7Q7 13 1 7Z" fill="#d0d4d8" stroke="#9aa0a8"/><path d="M2 1L13 12" stroke="#555" stroke-width="1.2"/></svg>
<div class="a" style="left:1275px;top:70px;width:18px;height:18px;background:linear-gradient(#cfe0f5,#a8c6ea);border:1px solid #4a78b0;border-radius:2px"></div>
<svg style="left:1277px;top:72px;" width="18" height="18" viewBox="0 0 18 18"><rect x="0.5" y="0.5" width="13" height="13" fill="#fff" stroke="#2f3f55"/><rect x="0" y="0" width="14" height="2.5" fill="#2f3f55"/><path d="M2.5 8Q7 4.5 11.5 8Q7 11.5 2.5 8Z" fill="#2f3f55"/></svg>
<svg style="left:1300px;top:72px;" width="18" height="18" viewBox="0 0 18 18"><rect x="0.5" y="0.5" width="15" height="13" fill="#fff" stroke="#2f3f55"/><rect x="0" y="0" width="16" height="2.5" fill="#2f3f55"/><path d="M3 8Q8 4.5 13 8Q8 11.5 3 8Z" fill="#c8ccd0"/><path d="M4 4L12 12" stroke="#555"/></svg>
<svg style="left:1324px;top:72px;" width="18" height="18" viewBox="0 0 18 18"><rect x="0.5" y="0.5" width="15" height="13" fill="#fff" stroke="#2f3f55"/><rect x="0" y="0" width="16" height="2.5" fill="#2f3f55"/><path d="M4 6Q8 3.5 12 6Q8 8.5 4 6Z" fill="#2f3f55"/><path d="M5 10Q8 8 11 10Q8 12 5 10Z" fill="#c0c4c8"/><path d="M5 8L11 13" stroke="#666"/></svg>
<svg style="left:1350px;top:72px;" width="18" height="18" viewBox="0 0 18 18"><path d="M3 3.5A5 5 0 1 1 2 9" fill="none" stroke="#3a4a5a" stroke-width="1.3"/><path d="M0 1L4.5 1.5L1.5 5Z" fill="#3a4a5a"/></svg>
<div class="a" style="left:1374px;top:73px;width:1px;height:14px;background:#d5d8de;"></div>
<div class="a" style="left:1387px;top:70px;width:18px;height:18px;background:linear-gradient(#cfe0f5,#a8c6ea);border:1px solid #4a78b0;border-radius:2px"></div>
<svg style="left:1390px;top:73px;" width="18" height="18" viewBox="0 0 18 18"><path d="M1 4H5L10 0V12L5 8H1Z" fill="#4a78a8"/><path d="M10 3Q14 6 10 9" fill="none" stroke="#4a78a8"/></svg>
<svg style="left:1413px;top:72px;" width="18" height="18" viewBox="0 0 18 18"><path d="M0.5 3.5L3.5 0.5H13.5V10.5L10.5 13.5H0.5Z" fill="#dde6f0" stroke="#5a7898"/><path d="M0.5 3.5H10.5V13.5M10.5 3.5L13.5 0.5" fill="none" stroke="#5a7898"/></svg>
<div class="a" style="left:1435px;top:70px;width:18px;height:18px;background:linear-gradient(#cfe0f5,#a8c6ea);border:1px solid #4a78b0;border-radius:2px"></div>
<svg style="left:1438px;top:73px;" width="18" height="18" viewBox="0 0 18 18"><rect x="0.5" y="0.5" width="11" height="11" fill="none" stroke="#3a5a80"/><rect x="2.5" y="2.5" width="9" height="9" fill="none" stroke="#3a5a80"/><path d="M0.5 0.5L2.5 2.5M11.5 0.5V11.5" stroke="#3a5a80"/></svg>
<div class="a" style="left:1462px;top:73px;width:1px;height:14px;background:#d5d8de;"></div>
<svg style="left:1476px;top:73px;" width="18" height="18" viewBox="0 0 18 18"><path d="M1 3H5L6.5 0.5H10L11.5 3H15V13H1Z" fill="#4a7fb5"/><circle cx="8.3" cy="8" r="3.6" fill="#fff"/><circle cx="8.3" cy="8" r="2.2" fill="#4a7fb5"/><rect x="2" y="4" width="2" height="1.5" fill="#fff"/></svg>
<svg style="left:1501px;top:71px;" width="18" height="18" viewBox="0 0 18 18"><rect x="3.5" y="0.5" width="9" height="5" fill="#fff" stroke="#4a7fb5"/><rect x="0" y="5" width="16" height="8" rx="1" fill="#4a7fb5"/><rect x="3" y="11" width="10" height="5" fill="#fff" stroke="#4a7fb5"/><rect x="11" y="7" width="2" height="1.5" fill="#fff"/></svg>
<div class="a" style="left:707px;top:92px;width:822px;height:477px;background:linear-gradient(#7fc3e6,#c7e6f3);"></div>
<div class="a" style="left:707px;top:569px;width:822px;height:1px;background:#cfd4d9;"></div>
<svg style="left:707px;top:92px" width="822" height="477" viewBox="707 92 822 477"><g><path d="M784.6 436.1L784.9 297.1M941.0 411.3L943.0 275.3M1091.6 387.5L1095.1 254.2M1234.6 364.9L1239.5 234.3M1370.5 343.4L1376.6 215.3M784.7 428.7L1426.0 327.9M784.7 394.8L1427.6 296.9M784.8 359.6L1429.3 264.7M784.9 325.1L1430.9 233.2M793.7 461.4L1435.2 357.4M802.3 466.4L1445.1 361.6M810.9 471.5L1455.0 365.9M819.5 476.6L1464.9 370.1M828.3 481.7L1475.0 374.4M793.7 461.4L828.3 481.7M950.2 436.0L986.2 455.5M1101.0 411.6L1138.2 430.3M1244.1 388.4L1282.5 406.4M1380.0 366.3L1419.4 383.7M1453.6 336.3L1460.6 209.3M1463.5 340.5L1470.6 213.0M1473.5 344.7L1480.7 216.8M1483.5 348.9L1490.8 220.6M1493.6 353.1L1501.0 224.5M1454.0 329.5L1494.0 346.2M1455.7 298.6L1495.8 314.9M1457.4 266.4L1497.7 282.3M1459.2 234.9L1499.5 250.4" stroke="#5d6b78" stroke-width="1" fill="none" opacity="0.8" shape-rendering="crispEdges"/><path d="M793.8 441.4L1436.2 339.1M828.4 461.5L1476.0 356.0M794.2 301.9L1443.0 211.7M829.2 320.2L1483.3 227.0M793.8 441.4L794.2 301.9M828.4 461.5L829.2 320.2M793.8 441.4L828.4 461.5M794.2 301.9L829.2 320.2M1436.2 339.1L1443.0 211.7M1476.0 356.0L1483.3 227.0M1436.2 339.1L1476.0 356.0M1443.0 211.7L1483.3 227.0M1041.7 401.9L1044.7 267.1M1078.5 420.7L1082.0 284.2M1041.7 401.9L1078.5 420.7M1044.7 267.1L1082.0 284.2M1383.3 347.5L1389.6 219.1M1422.8 364.6L1429.6 234.7M1383.3 347.5L1422.8 364.6M1389.6 219.1L1429.6 234.7M1055.7 277.7L1072.6 285.5M1054.1 346.1L1070.9 354.3M1054.1 346.1L1055.7 277.7M1070.9 354.3L1072.6 285.5M1053.6 366.5L1070.4 374.7M1053.2 384.0L1069.9 392.4M1052.8 400.2L1069.5 408.7M1052.8 400.2L1053.6 366.5M1069.5 408.7L1070.4 374.7M1398.2 229.5L1416.3 236.6M1395.0 294.6L1413.0 302.0M1395.0 294.6L1398.2 229.5M1413.0 302.0L1416.3 236.6M1394.0 314.0L1411.9 321.5M1393.2 330.7L1411.1 338.4M1392.4 346.2L1410.3 353.9M1392.4 346.2L1394.0 314.0M1410.3 353.9L1411.9 321.5M1055.7 277.7L1398.2 229.5M1072.6 285.5L1416.3 236.6M1054.1 346.1L1395.0 294.6M1070.9 354.3L1413.0 302.0M1053.6 366.5L1394.0 314.0M1070.4 374.7L1411.9 321.5M802.8 440.1L818.4 449.1M802.8 423.3L818.5 432.3M802.8 440.1L802.8 423.3M818.4 449.1L818.5 432.3M802.8 440.1L1392.4 346.2M818.4 449.1L1410.3 353.9M802.8 423.3L1393.2 330.7M818.5 432.3L1411.1 338.4" stroke="#1a232c" stroke-width="1" fill="none" shape-rendering="crispEdges"/><path d="M1072.6 286.1L1416.3 237.2" stroke="#0a0a0a" stroke-width="1.6" fill="none"/></g></svg>
<svg style="left:707px;top:92px" width="822" height="477" viewBox="707 92 822 477"><text x="781.5" y="281" style="font-family:Liberation Sans;font-size:11.5px;fill:#101010;letter-spacing:0.5px">0</text><text x="940.5" y="260" style="font-family:Liberation Sans;font-size:11.5px;fill:#101010;letter-spacing:0.5px">5</text><text x="1087.5" y="238.8" style="font-family:Liberation Sans;font-size:11.5px;fill:#101010;letter-spacing:0.5px">10</text><text x="1232.5" y="219" style="font-family:Liberation Sans;font-size:11.5px;fill:#101010;letter-spacing:0.5px">15</text><text x="1373" y="201" style="font-family:Liberation Sans;font-size:11.5px;fill:#101010;letter-spacing:0.5px">20</text><text x="762.5" y="331.5" style="font-family:Liberation Sans;font-size:11.5px;fill:#101010;letter-spacing:0.5px">3</text><text x="762.5" y="366" style="font-family:Liberation Sans;font-size:11.5px;fill:#101010;letter-spacing:0.5px">2</text><text x="762.5" y="401.5" style="font-family:Liberation Sans;font-size:11.5px;fill:#101010;letter-spacing:0.5px">1</text><text x="762.5" y="435.8" style="font-family:Liberation Sans;font-size:11.5px;fill:#101010;letter-spacing:0.5px">0</text><text x="763.5" y="467.5" style="font-family:Liberation Sans;font-size:11.5px;fill:#101010;letter-spacing:0.5px">-0.5</text><text x="780.5" y="471.6" style="font-family:Liberation Sans;font-size:11.5px;fill:#101010;letter-spacing:0.5px">0</text><text x="782.5" y="478.4" style="font-family:Liberation Sans;font-size:11.5px;fill:#101010;letter-spacing:0.5px">0.5</text><text x="799" y="482.8" style="font-family:Liberation Sans;font-size:11.5px;fill:#101010;letter-spacing:0.5px">1</text><text x="800.5" y="488.5" style="font-family:Liberation Sans;font-size:11.5px;fill:#101010;letter-spacing:0.5px">1.5</text><text x="746.5" y="495" style="font-family:Liberation Sans;font-size:11.5px;fill:#101010;letter-spacing:0.5px">y</text><text x="776.5" y="526" style="font-family:Liberation Sans;font-size:11.5px;fill:#101010;letter-spacing:0.5px">x</text><text x="766.5" y="539" style="font-family:Liberation Sans;font-size:11.5px;fill:#101010;letter-spacing:0.5px">z</text><path d="M749.3 526.7V505" stroke="#00e000" stroke-width="1.6"/><path d="M746 507L749.3 499L752.6 507Z" fill="#00e000"/><path d="M749.3 526.7L767 524" stroke="#e00000" stroke-width="1.6"/><path d="M766 520.5L774 523.3L767 527.5Z" fill="#ff0000"/><path d="M749.3 526.7L759 532" stroke="#0000d0" stroke-width="1.6"/><path d="M757 529L764.5 534.5L757.5 535.5Z" fill="#0000e0"/></svg>
<div class="a" style="left:706px;top:575px;width:823px;height:108px;background:#f9fafc;border-left:1px solid #d3d7de;border-top:1px solid #d3d7de"></div>
<div class="a" style="left:711px;top:581px;width:69px;height:24px;background:#f9fafc;border:1px solid #d3d7de;border-bottom:none"></div>
<div class="a" style="left:716px;top:587px;font-size:13px;color:#4a6a9a;">Messages</div>
<div class="a" style="left:788px;top:582px;width:60px;height:22px;background:#ebebeb;"></div>
<div class="a" style="left:792px;top:587px;font-size:13px;">Progress</div>
<div class="a" style="left:856px;top:582px;width:30px;height:22px;background:#ebebeb;"></div>
<div class="a" style="left:860px;top:587px;font-size:13px;">Log</div>
<div class="a" style="left:894px;top:582px;width:40px;height:22px;background:#ebebeb;"></div>
<div class="a" style="left:898px;top:587px;font-size:13px;">Table</div>
<div class="a" style="left:707px;top:604px;width:822px;height:1px;background:#d3d7de;"></div>
<svg style="left:716px;top:612px;" width="11" height="15" viewBox="0 0 11 15"><path d="M1 0 L5 8" stroke="#555" stroke-width="1.3"/><path d="M3.5 7 L7 6 L10 13 Q7 15 5 14Z" fill="#e8c9a0" stroke="#9a7a50" stroke-width="0.7"/></svg>
<div class="a" style="left:711px;top:633px;width:818px;height:50px;background:#fafbfd;border-left:1px solid #d3d7de;border-top:1px solid #d3d7de"></div>
<div class="a" style="left:715px;top:636px;">COMSOL 5.1.0.234</div>
<div class="a" style="left:715px;top:651px;">Opened file: decoupled_beam_v0.mph</div>
<div class="a" style="left:7px;top:32px;width:318px;height:107px;background:#f7f8fb;border:1px solid #c6cad2"></div>
<div class="a" style="left:13px;top:40px;color:#555b66;font-weight:bold;letter-spacing:-0.15px">Application Builder (Ctrl+Alt+A)</div>
<div class="a" style="left:21px;top:75px;font-size:17px;color:#4aa04a;">A</div>
<div class="a" style="left:51px;top:63px;color:#5f6672;">Open the Application Builder to modify the user</div>
<div class="a" style="left:51px;top:78px;color:#5f6672;">interface of the application and to create and edit</div>
<div class="a" style="left:51px;top:92px;color:#5f6672;">code for the application.</div>
<div class="a" style="left:13px;top:112px;width:305px;height:1px;background:#c9cdd4;"></div>
<svg style="left:14px;top:119px;" width="14" height="14" viewBox="0 0 14 14"><rect width="14" height="14" fill="#3d78c0"/><text x="7" y="11.5" text-anchor="middle" font-size="11" font-weight="bold" fill="#fff" font-family="Liberation Sans">?</text></svg>
<div class="a" style="left:36px;top:119px;color:#5a5f68;font-weight:bold">Press F1 for more help.</div>
<svg style="left:0;top:0" width="1529" height="683" viewBox="0 0 1529 683"><path d="M190.6 244.5 C198 243.5 206 242.5 210 244.5 C214 247 216 252 217 258 C218 268 222 280 228 292 C234 306 238 322 244 332 C250 342 256 352 264 364 C270 374 276 386 280 396" fill="none" stroke="#f50a0a" stroke-linecap="round" stroke-linejoin="round" stroke-width="7.5"/><path d="M265.8 384.4 L280.3 396.2 L271 348.7" fill="none" stroke="#f50a0a" stroke-linecap="round" stroke-linejoin="round" stroke-width="7"/><path d="M431.2 496.4 C410 499 385 503 360 505.5" fill="none" stroke="#f50a0a" stroke-linecap="round" stroke-linejoin="round" stroke-width="6.5"/><path d="M377 496.4 L353 505.9 L370.4 515.4" fill="none" stroke="#f50a0a" stroke-linecap="round" stroke-linejoin="round" stroke-width="6.5"/><path d="M1037.6 202.5 C1036.8 220 1036.8 236 1039 250" fill="none" stroke="#f50a0a" stroke-linecap="round" stroke-linejoin="round" stroke-width="7"/><ellipse cx="1040" cy="243" rx="5.2" ry="12" fill="#f50a0a"/><path d="M1037.5 252.5 C1032 250 1026 247 1020.5 242.5" fill="none" stroke="#f50a0a" stroke-linecap="round" stroke-linejoin="round" stroke-width="8.5"/><path d="M1392.3 143.3 C1391 165 1391.5 185 1389.4 200.4 L1390.4 210" fill="none" stroke="#f50a0a" stroke-linecap="round" stroke-linejoin="round" stroke-width="8"/><path d="M1369.4 187.1 L1390.4 213 L1411.3 180.4" fill="none" stroke="#f50a0a" stroke-linecap="round" stroke-linejoin="round" stroke-width="8"/></svg>
</body></html>
